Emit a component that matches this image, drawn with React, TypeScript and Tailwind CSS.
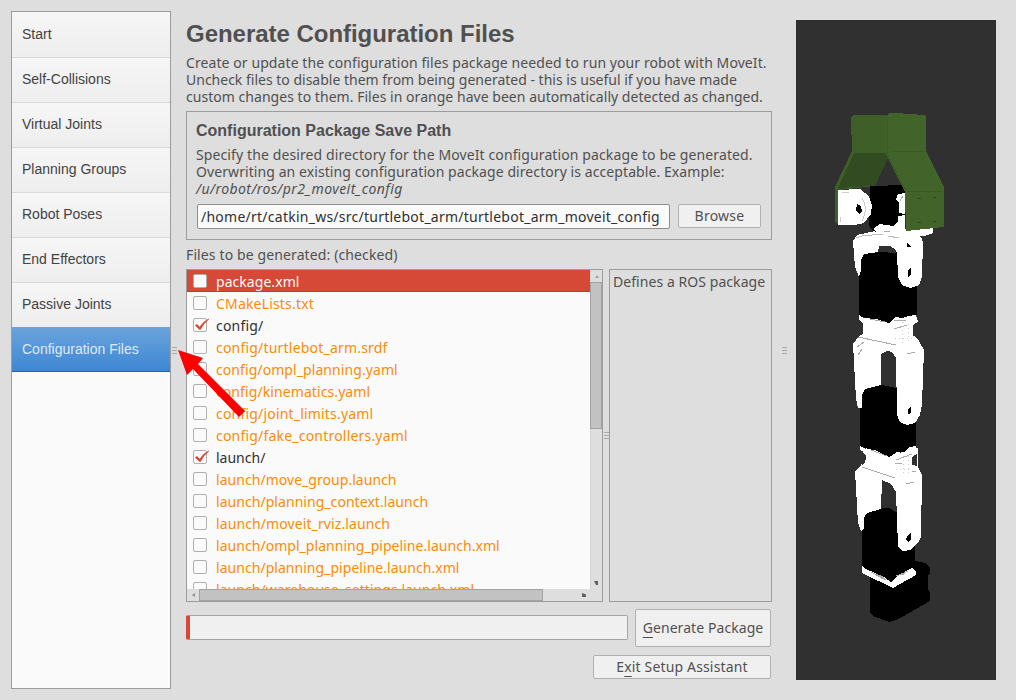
import React from "react";

const steps = [
  "Start",
  "Self-Collisions",
  "Virtual Joints",
  "Planning Groups",
  "Robot Poses",
  "End Effectors",
  "Passive Joints",
  "Configuration Files",
];

type FileRow = { name: string; tracking: string; checked?: boolean; selected?: boolean };

const files: FileRow[] = [
  { name: "package.xml", tracking: "tracking-[0.05px]", selected: true },
  { name: "CMakeLists.txt", tracking: "tracking-[0.18px]" },
  { name: "config/", tracking: "tracking-[0.2px]", checked: true },
  { name: "config/turtlebot_arm.srdf", tracking: "tracking-[0.2px]" },
  { name: "config/ompl_planning.yaml", tracking: "tracking-[0.08px]" },
  { name: "config/kinematics.yaml", tracking: "tracking-[0.09px]" },
  { name: "config/joint_limits.yaml", tracking: "tracking-[0.19px]" },
  { name: "config/fake_controllers.yaml", tracking: "tracking-[0.2px]" },
  { name: "launch/", tracking: "tracking-normal", checked: true },
  { name: "launch/move_group.launch", tracking: "tracking-[0.04px]" },
  { name: "launch/planning_context.launch", tracking: "tracking-[0.05px]" },
  { name: "launch/moveit_rviz.launch", tracking: "tracking-[0.1px]" },
  { name: "launch/ompl_planning_pipeline.launch.xml", tracking: "tracking-[0.04px]" },
  { name: "launch/planning_pipeline.launch.xml", tracking: "tracking-[0.04px]" },
  { name: "launch/warehouse_settings.launch.xml", tracking: "tracking-[0.05px]" },
];

function Sidebar() {
  return (
    <nav className="mt-[11px] ml-[11px] h-[678px] w-[160px] shrink-0 border border-[#9c9c9c] bg-[#fafafa] font-['Liberation_Sans',sans-serif] text-[14px]">
      {steps.map((s, i) =>
        i === steps.length - 1 ? (
          <div
            key={s}
            className="flex h-[45px] items-center border-b border-[#1f66ad] bg-linear-to-b from-[#6aa3de] to-[#3d87d3] pl-[10px] text-[#dfe9f5]"
          >
            {s}
          </div>
        ) : (
          <div
            key={s}
            className="flex h-[45px] items-center border-t border-[#dadada] bg-linear-to-b from-[#f6f6f6] to-[#eeeeee] pb-[2px] pl-[10px] text-[#424242] first:border-[#f6f6f6]"
          >
            {s}
          </div>
        ),
      )}
    </nav>
  );
}

function Grip() {
  return (
    <div className="flex w-[5px] flex-col gap-[2px]">
      <i className="h-px bg-[#a8a8a8]" />
      <i className="h-px bg-[#a8a8a8]" />
      <i className="h-px bg-[#a8a8a8]" />
    </div>
  );
}

function CheckBox({ checked }: { checked?: boolean }) {
  return (
    <span className="relative -mt-px h-[14px] w-[14px] shrink-0 rounded-[2px] border border-[#b0b0b0] bg-[#fafafa]">
      {checked && (
        <svg className="absolute -top-[1px] -left-[1px] h-[14px] w-[17px]" viewBox="0 0 17 14">
          <path d="M2 7.4 L4 6 L6.6 8.8 Q10 3.6 15.6 0.6 L16 1.2 Q10.8 5.2 7.6 11.8 L6.4 11.8 Z" fill="#d64937" />
        </svg>
      )}
    </span>
  );
}

function FileTree() {
  return (
    <div className="flex h-[333px] w-[417px] flex-col border border-[#9c9c9c] bg-[#dedede]">
      <div className="flex h-[319px]">
        <div className="h-full w-[403px] overflow-hidden bg-[#fafafa]">
          {files.map((f) => (
            <div
              key={f.name}
              className={
                "flex h-[22px] items-center gap-[9px] pl-[6px] " +
                (f.selected
                  ? "bg-[#d64937] pt-px text-[#fafafa] shadow-[inset_0_-1px_#c03c2b]"
                  : f.checked
                    ? "text-[#303030]"
                    : "text-[#fb8c05]")
              }
            >
              <CheckBox checked={f.checked} />
              <span className={"whitespace-nowrap " + f.tracking}>{f.name}</span>
            </div>
          ))}
        </div>
        <div className="flex w-[12px] flex-col justify-between border-l border-[#d2d2d2]">
          <div className="flex flex-col">
            <div className="flex h-[12px] items-center justify-center">
              <svg className="h-[3px] w-[4px]" viewBox="0 0 4 3">
                <path d="M0 3 L2 0 L4 3Z" fill="#a0a0a0" />
              </svg>
            </div>
            <div className="-ml-px h-[147px] w-[12px] border border-[#a2a2a2] bg-[#c2c2c2]" />
          </div>
          <svg className="mb-[4px] ml-[3px] h-[4px] w-[4px]" viewBox="0 0 4 4">
            <path d="M0 0 H4 V4 H2 Z" fill="#606060" />
          </svg>
        </div>
      </div>
      <div className="flex h-[12px] items-center">
        <div className="flex w-[12px] justify-center">
          <svg className="h-[4px] w-[3px]" viewBox="0 0 3 4">
            <path d="M3 0 L0 2 L3 4Z" fill="#909090" />
          </svg>
        </div>
        <div className="h-[12px] w-[344px] border border-[#a2a2a2] bg-[#c2c2c2]" />
        <svg className="ml-[39px] h-[4px] w-[4px]" viewBox="0 0 4 4">
          <path d="M0 0 L4 1.5 V4 H0 Z" fill="#606060" />
        </svg>
      </div>
    </div>
  );
}

function RobotView() {
  return (
    <svg className="h-[660px] w-[200px] bg-[#303030]" viewBox="796 20 200 660" shapeRendering="crispEdges">
      {/* base */}
      <path d="M870 575 V612 L873 616 L889 622 L898 619 L904 616 L909 613 L930 601 V593 L928 589 V575 L930 573 V568 L925 563 L915 561 L905 566Z" fill="#000" />
      {/* lower servo */}
      <path d="M862 521 L864 514 L883 507 L889 508 L897 512 L915 535 V568 L891 585 L862 569Z" fill="#000" />
      <path d="M862 566 L866 569 L884 577 L891 582 L897 576 L912 568 L916 571 V575 L893 588 L862 573Z" fill="#fff" />
      <path d="M869 571 L882 576 L888 581 L882 579Z M895 576 L903 575 L910 570Z" fill="#aaa" />
      {/* lower bracket */}
      <path d="M855 471 L861 465 L866 459 V448 L918 448 V467 L922 475 L921 537 L918 543 L910 550 L903 551 L898 547 L896 492 L891 484 L882 480 L881 509 L867 513 L864 518 V529 L861 531 L858 523Z" fill="#fff" />
      <path d="M882 480 L891 484 L896 492 V512 L889 508 L881 508Z" fill="#303030" />
      <path d="M906 539 L909 534 L911 533 V539 L908 542Z" fill="#000" />
      {/* middle servo */}
      <path d="M860 394 L863 390 L881 385 L897 388 L916 420 V447 L905 452 L896 453 L889 457 L860 446Z" fill="#000" />
      <path d="M860 446 L866 449 L875 450 L890 458 L896 452 L903 453 L910 447 L916 446 V454 L911 456 V466 L917 467 L919 473 L896 478 L866 466 V455 L860 450Z" fill="#fff" />
      <path d="M862 450 V466 L865 462 V455Z M912 457 L917 454 V466 L912 465Z" fill="#303030" />
      <path d="M862 467 L895 478 M871 450 L887 456 M896 460 L912 454 M895 463 L902 463 M912 471 H916 M906 484 L914 482" stroke="#aaa" strokeWidth="1" fill="none" />
      <path d="M903 456 V474 M908 456 V474 M896 469 H912" stroke="#ccc" strokeWidth="1" strokeDasharray="1 3" fill="none" />
      {/* middle bracket */}
      <path d="M853 344 L859 336 L915 336 L919 341 L924 350 L922 404 L920 415 L915 423 L907 425 L900 422 L897 415 L896 358 L892 352 L887 351 L881 354 V385 L865 389 L862 395 V408 L858 408 L856 399Z" fill="#fff" />
      <path d="M881 354 L887 351 L892 352 L896 358 V388 L881 385Z" fill="#303030" />
      <path d="M908 409 L911 407 V413 L908 414Z" fill="#000" />
      <path d="M857 347 L864 342 M858 355 L862 349 M907 354 L915 352" stroke="#aaa" strokeWidth="1" fill="none" />
      {/* upper servo */}
      <path d="M859 258 L863 253 L897 250 L917 270 V315 L905 320 L889 323 L859 316Z" fill="#000" />
      <path d="M859 315 L864 318 L876 319 L889 323 L895 317 L903 318 L908 316 L916 315 L918 322 L913 325 V337 L919 341 L916 346 L896 347 L858 337 L863 334 V323 L859 320Z" fill="#fff" />
      <path d="M858 337 L896 345 M894 329 L907 325 M894 321 L906 320 M870 319 L885 322" stroke="#aaa" strokeWidth="1" fill="none" />
      <path d="M902 322 V344 M908 324 V344 M895 338 H914" stroke="#ccc" strokeWidth="1" strokeDasharray="1 3" fill="none" />
      {/* upper bracket */}
      <path d="M853 241 L857 235 L875 231 L915 233 L921 237 L923 242 L922 277 L919 285 L910 288 L902 285 L898 277 L897 252 L892 248 L879 246 L878 252 L864 254 L861 260 V270 L859 277 L855 267Z" fill="#fff" />
      <path d="M879 246 H890 L896 250 V253 L879 252Z" fill="#303030" />
      <path d="M907 243 L911 247 H907Z M908 271 L911 267 V274 L908 277Z" fill="#000" />
      <path d="M856 238 L862 236 L883 234 M888 236 L899 238" stroke="#bbb" strokeWidth="1" fill="none" />
      {/* wrist */}
      <path d="M870 186 L905 185 V232 H876 L872 230 L869 225Z" fill="#000" />
      <path d="M873 229 L880 224 L893 226 L898 221 V216 L905 215 V229 L933 228 V233 L924 236 L878 233Z" fill="#fff" />
      <path d="M898 194 L905 193 V214 L899 213 L899 202 L896 200Z" fill="#fff" />
      <path d="M900 201 L903 196 M884 231 L890 231" stroke="#aaa" strokeWidth="1" />
      <path d="M837 190 L860 189 L869 196 L872 205 L871 214 L864 223 L855 225 L838 225Z" fill="#fff" />
      <path d="M857 204 L861 206 L862 211 L859 214 L856 210Z" fill="#000" />
      <path d="M862 198 Q869 209 862 221 M842 192 H849 M840 217 V222" stroke="#ccc" strokeWidth="1" fill="none" />
      {/* gripper */}
      <path d="M851 117 L853 115 H886 L888 158 L875 186 L838 190 V224 L835 222 V187 L852 151Z" fill="#3f5f28" />
      <path d="M854 153 L886 153 L888 158 L875 186 L850 187 L837 190Z" fill="#324b20" />
      <path d="M886 116 L889 113 H896 L924 115 L926 117 V151 L944 187 V227 L906 231 L905 192 L886 154Z" fill="#426329" />
      <path d="M887 118 V153 L906 191 H943 M890 151 H925" stroke="#3b5a25" strokeWidth="1" fill="none" />
      <path d="M918 198.5 H921 M933 197.5 H936 M918 222.5 H921 M933 221.5 H936" stroke="#2d471c" strokeWidth="1" />
    </svg>
  );
}

export default function App() {
  return (
    <div className="relative flex h-[700px] w-[1016px] overflow-hidden bg-[#dedede] font-['Noto_Sans',sans-serif] text-[14px] leading-[17px] text-[#505050]">
      <Sidebar />
      <div className="flex w-[15px] items-center pl-px">
        <Grip />
      </div>
      <main className="flex w-[586px] shrink-0 flex-col">
        <h1 className="mt-[19px] h-[30px] font-['Liberation_Sans',sans-serif] text-[24px] leading-[30px] font-bold tracking-[-0.03px] whitespace-nowrap">
          Generate Configuration Files
        </h1>
        <p className="mt-[5px] whitespace-nowrap">
          <span className="block tracking-[0.085px]">Create or update the configuration files package needed to run your robot with MoveIt.</span>
          <span className="block">Uncheck files to disable them from being generated - this is useful if you have made</span>
          <span className="block tracking-[0.035px]">custom changes to them. Files in orange have been automatically detected as changed.</span>
        </p>
        <section className="mt-[6px] h-[129px] border border-[#9c9c9c] pl-[9px] whitespace-nowrap">
          <h2 className="mt-[9px] h-[20px] font-['Liberation_Sans',sans-serif] text-[16px] leading-[20px] font-bold">
            Configuration Package Save Path
          </h2>
          <p className="mt-[5px]">
            <span className="block tracking-[0.11px]">Specify the desired directory for the MoveIt configuration package to be generated.</span>
            <span className="block tracking-[0.08px]">Overwriting an existing configuration package directory is acceptable. Example:</span>
            <span className="block tracking-[0.44px] italic">/u/robot/ros/pr2_moveit_config</span>
          </p>
          <div className="mt-[7px] ml-px flex gap-[8px]">
            <div className="flex h-[25px] w-[473px] items-center rounded-[2px] border border-[#8e8e8e] bg-[#fafafa] pl-[3px] text-[#303030]">
              <span className="tracking-[0.25px]">/home/rt/catkin_ws/src/turtlebot_arm/turtlebot_arm_moveit_config</span>
            </div>
            <button className="flex h-[24px] w-[83px] items-center justify-center rounded-[2px] border border-[#b0b0b0] bg-[#f0f0f0] pb-px tracking-[0.25px]">
              Browse
            </button>
          </div>
        </section>
        <div className="mt-[6px] h-[23px] tracking-[0.12px]">Files to be generated: (checked)</div>
        <div className="flex items-center">
          <FileTree />
          <div className="w-[6px]">
            <div className="ml-px">
              <Grip />
            </div>
          </div>
          <div className="h-[333px] w-[163px] border border-[#9c9c9c] pt-[3px] pl-[3px] tracking-[0.06px] whitespace-nowrap">
            Defines a ROS package
          </div>
        </div>
        <div className="mt-[7px] flex w-[585px] items-center justify-between">
          <div className="-mt-px h-[25px] w-[442px] rounded-[2px] border border-l-4 border-[#a4a4a4] border-l-[#d64937] bg-[#f0f0f0]" />
          <button className="flex h-[38px] w-[136px] items-center justify-center rounded-[2px] border border-[#b0b0b0] bg-[#f0f0f0] pb-[2px] tracking-[0.07px] whitespace-nowrap">
            <span>
              <u className="underline-offset-4">G</u>enerate Package
            </span>
          </button>
        </div>
        <button className="mt-[8px] ml-[407px] flex h-[24px] w-[178px] items-center justify-center rounded-[2px] border border-[#b0b0b0] bg-[#f0f0f0] pb-[2px] tracking-[0.16px]">
          <span>
            E<u className="underline-offset-4">x</u>it Setup Assistant
          </span>
        </button>
      </main>
      <div className="flex w-[24px] items-center pl-[10px]">
        <Grip />
      </div>
      <div className="mt-[20px]">
        <RobotView />
      </div>
      <svg className="absolute top-[346px] left-[174px] h-[75px] w-[75px]" viewBox="174 346 75 75">
        <path d="M178 350 L203 358 L198 364 L245 411 L239 417 L193 369 L187 375Z" fill="#f00" />
      </svg>
    </div>
  );
}
